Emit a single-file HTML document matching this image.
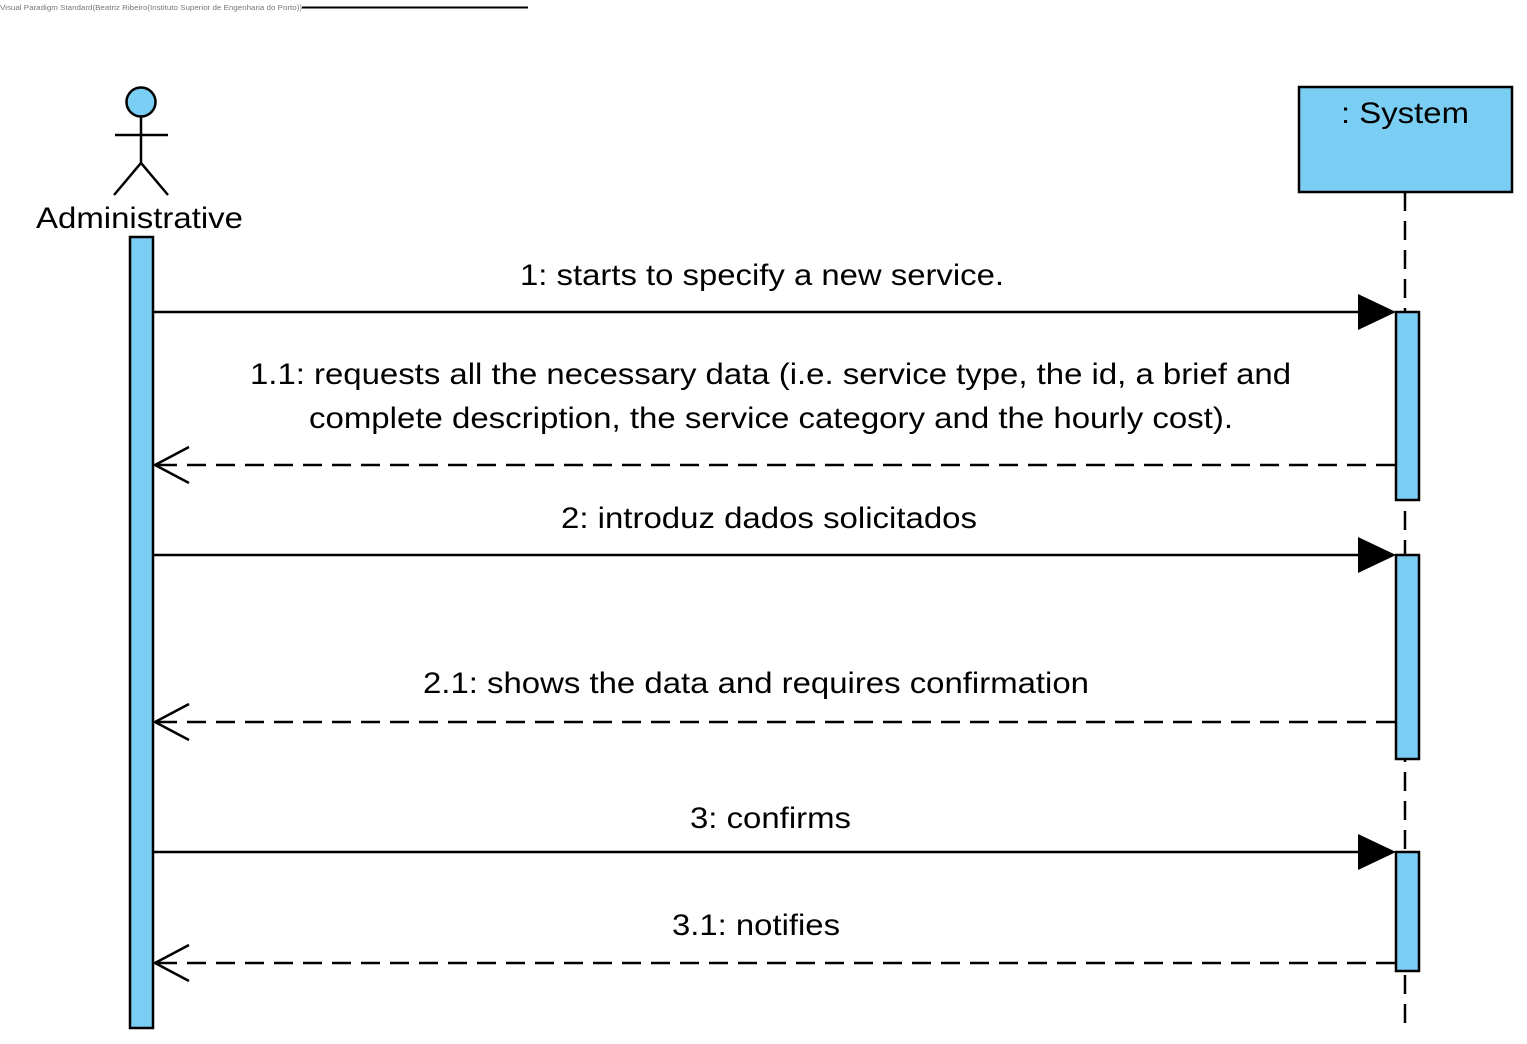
<!DOCTYPE html>
<html><head><meta charset="utf-8"><style>
html,body{margin:0;padding:0;background:#fff;width:1527px;height:1044px;overflow:hidden}
svg{display:block}
text{font-family:"Liberation Sans",Arial,sans-serif;fill:#000}
</style></head><body>
<svg width="1527" height="1044" viewBox="0 0 1527 1044" xmlns="http://www.w3.org/2000/svg">
<text x="0" y="10" font-size="7" fill="#777" style="fill:#777" textLength="302" lengthAdjust="spacingAndGlyphs">Visual Paradigm Standard(Beatriz Ribeiro(Instituto Superior de Engenharia do Porto))</text>
<line x1="302" y1="7.5" x2="528" y2="7.5" stroke="#000" stroke-width="2"/>

<!-- actor -->
<circle cx="141" cy="102" r="14.5" fill="#7ACEF4" stroke="#000" stroke-width="2.5"/>
<line x1="141" y1="116" x2="141" y2="163" stroke="#000" stroke-width="2.5"/>
<line x1="115" y1="135" x2="168" y2="135" stroke="#000" stroke-width="2.5"/>
<polyline points="114,195 141,163 168,195" fill="none" stroke="#000" stroke-width="2.5"/>
<text x="36" y="228" font-size="30" textLength="207" lengthAdjust="spacingAndGlyphs">Administrative</text>
<rect x="130" y="237" width="23" height="791" fill="#7ACEF4" stroke="#000" stroke-width="2.5"/>

<!-- system -->
<line x1="1405" y1="192" x2="1405" y2="1032" stroke="#000" stroke-width="2.5" stroke-dasharray="19,10"/>
<rect x="1299" y="87" width="213" height="105" fill="#7ACEF4" stroke="#000" stroke-width="2.5"/>
<text x="1341" y="123" font-size="30" textLength="128" lengthAdjust="spacingAndGlyphs">: System</text>
<rect x="1396" y="312" width="23" height="188" fill="#7ACEF4" stroke="#000" stroke-width="2.5"/>
<rect x="1396" y="555" width="23" height="204" fill="#7ACEF4" stroke="#000" stroke-width="2.5"/>
<rect x="1396" y="852" width="23" height="119" fill="#7ACEF4" stroke="#000" stroke-width="2.5"/>

<!-- messages -->
<g stroke="#000" stroke-width="2.5">
<line x1="154" y1="312" x2="1360" y2="312"/>
<line x1="154" y1="555" x2="1360" y2="555"/>
<line x1="154" y1="852" x2="1360" y2="852"/>
<line x1="1395" y1="465" x2="155" y2="465" stroke-dasharray="19,10"/>
<line x1="1395" y1="722" x2="155" y2="722" stroke-dasharray="19,10"/>
<line x1="1395" y1="963" x2="155" y2="963" stroke-dasharray="19,10"/>
<polyline points="189,447 155,465 189,483" fill="none"/>
<polyline points="189,704 155,722 189,740" fill="none"/>
<polyline points="189,945 155,963 189,981" fill="none"/>
</g>
<polygon points="1358,294 1396,312 1358,330" fill="#000"/>
<polygon points="1358,537 1396,555 1358,573" fill="#000"/>
<polygon points="1358,834 1396,852 1358,870" fill="#000"/>

<g font-size="30">
<text x="520" y="285" textLength="484" lengthAdjust="spacingAndGlyphs">1: starts to specify a new service.</text>
<text x="250" y="384" textLength="1041" lengthAdjust="spacingAndGlyphs">1.1: requests all the necessary data (i.e. service type, the id, a brief and</text>
<text x="309" y="428" textLength="924" lengthAdjust="spacingAndGlyphs">complete description, the service category and the hourly cost).</text>
<text x="561" y="528" textLength="416" lengthAdjust="spacingAndGlyphs">2: introduz dados solicitados</text>
<text x="423" y="693" textLength="666" lengthAdjust="spacingAndGlyphs">2.1: shows the data and requires confirmation</text>
<text x="690" y="828" textLength="161" lengthAdjust="spacingAndGlyphs">3: confirms</text>
<text x="672" y="935" textLength="168" lengthAdjust="spacingAndGlyphs">3.1: notifies</text>
</g>
</svg>
</body></html>
